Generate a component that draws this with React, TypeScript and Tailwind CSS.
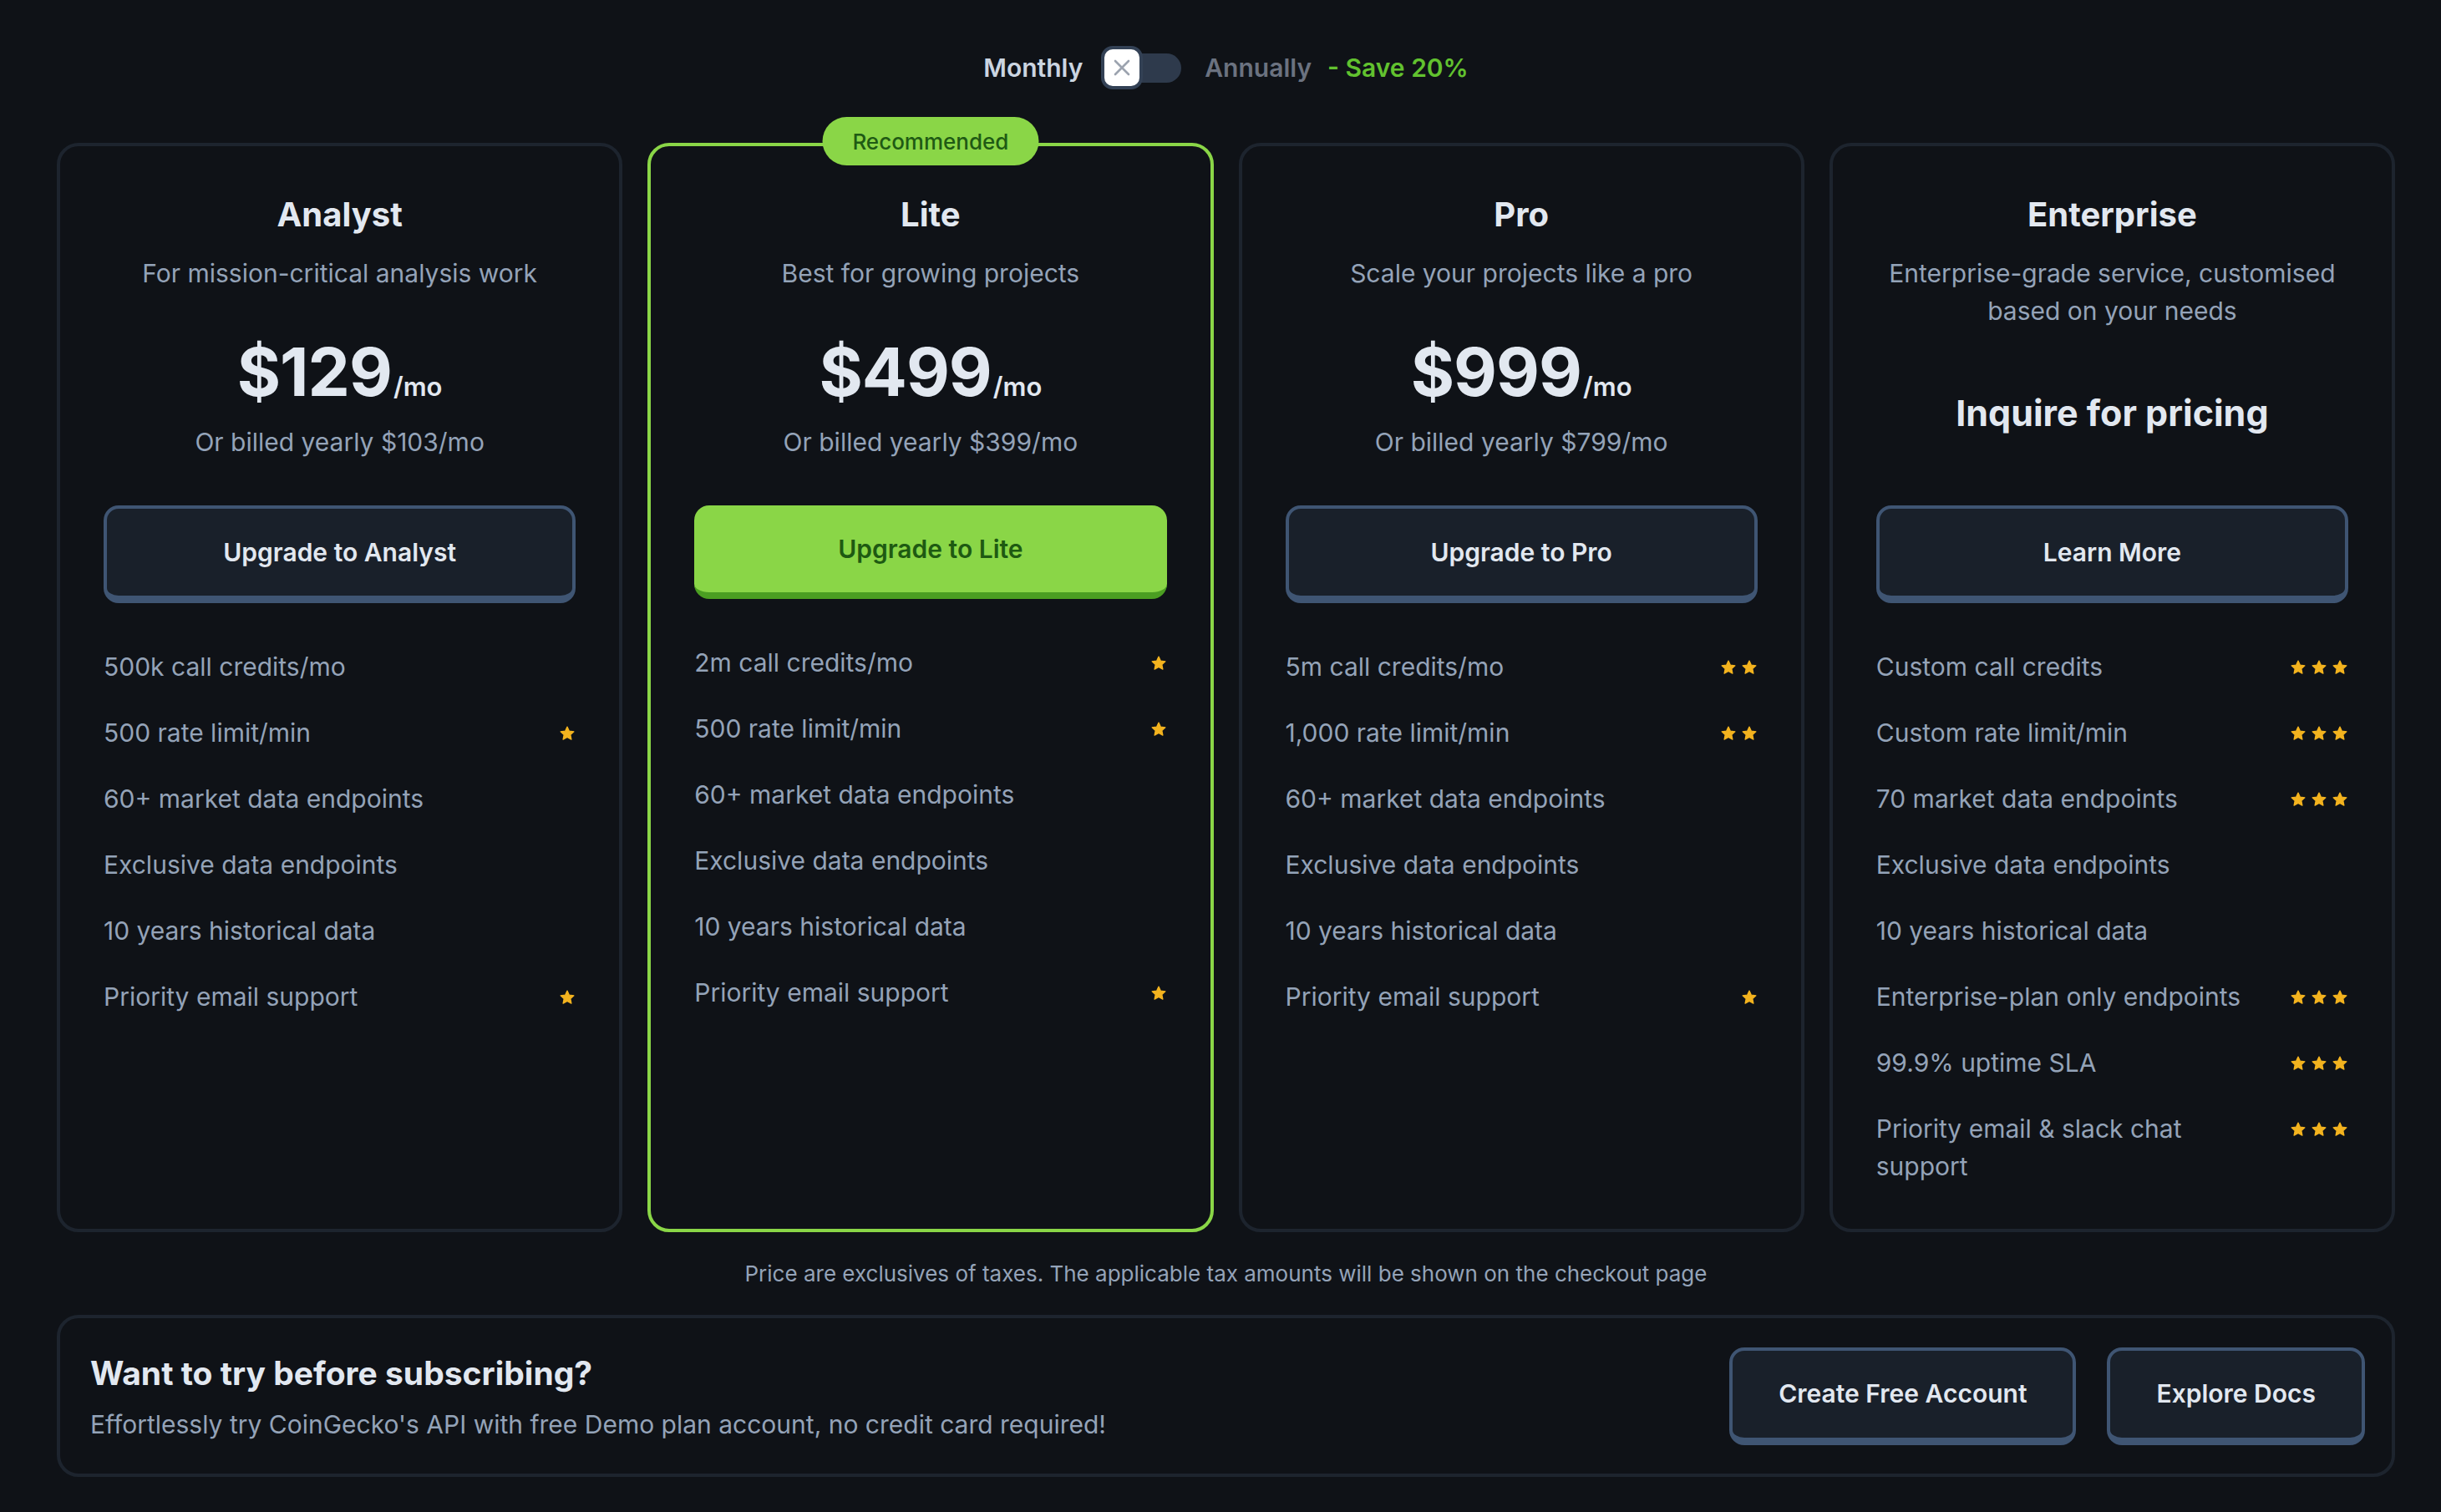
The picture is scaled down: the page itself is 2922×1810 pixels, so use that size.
import React from "react";

type Feature = { text: string; stars: number };
type Plan = {
  name: string;
  subtitle: string;
  price?: string;
  yearly?: string;
  cta: string;
  recommended?: boolean;
  features: Feature[];
};

const plans: Plan[] = [
  {
    name: "Analyst",
    subtitle: "For mission-critical analysis work",
    price: "$129",
    yearly: "Or billed yearly $103/mo",
    cta: "Upgrade to Analyst",
    features: [
      { text: "500k call credits/mo", stars: 0 },
      { text: "500 rate limit/min", stars: 1 },
      { text: "60+ market data endpoints", stars: 0 },
      { text: "Exclusive data endpoints", stars: 0 },
      { text: "10 years historical data", stars: 0 },
      { text: "Priority email support", stars: 1 },
    ],
  },
  {
    name: "Lite",
    subtitle: "Best for growing projects",
    price: "$499",
    yearly: "Or billed yearly $399/mo",
    cta: "Upgrade to Lite",
    recommended: true,
    features: [
      { text: "2m call credits/mo", stars: 1 },
      { text: "500 rate limit/min", stars: 1 },
      { text: "60+ market data endpoints", stars: 0 },
      { text: "Exclusive data endpoints", stars: 0 },
      { text: "10 years historical data", stars: 0 },
      { text: "Priority email support", stars: 1 },
    ],
  },
  {
    name: "Pro",
    subtitle: "Scale your projects like a pro",
    price: "$999",
    yearly: "Or billed yearly $799/mo",
    cta: "Upgrade to Pro",
    features: [
      { text: "5m call credits/mo", stars: 2 },
      { text: "1,000 rate limit/min", stars: 2 },
      { text: "60+ market data endpoints", stars: 0 },
      { text: "Exclusive data endpoints", stars: 0 },
      { text: "10 years historical data", stars: 0 },
      { text: "Priority email support", stars: 1 },
    ],
  },
  {
    name: "Enterprise",
    subtitle: "Enterprise-grade service, customised based on your needs",
    cta: "Learn More",
    features: [
      { text: "Custom call credits", stars: 3 },
      { text: "Custom rate limit/min", stars: 3 },
      { text: "70 market data endpoints", stars: 3 },
      { text: "Exclusive data endpoints", stars: 0 },
      { text: "10 years historical data", stars: 0 },
      { text: "Enterprise-plan only endpoints", stars: 3 },
      { text: "99.9% uptime SLA", stars: 3 },
      { text: "Priority email & slack chat support", stars: 3 },
    ],
  },
];

function Star() {
  return (
    <svg width="20" height="20" viewBox="0 0 24 24" fill="#f3b31f" stroke="#f3b31f" strokeWidth="1.5" strokeLinejoin="round">
      <path d="M12 2.5l2.9 6.1 6.6.8-4.9 4.6 1.3 6.6L12 17.3l-5.9 3.3 1.3-6.6-4.9-4.6 6.6-.8L12 2.5z" />
    </svg>
  );
}

function PlanCard({ plan }: { plan: Plan }) {
  const rec = plan.recommended;
  return (
    <div
      className={
        rec
          ? "relative flex flex-col rounded-[26px] border-[4px] border-[#8ad647] px-[52px] pt-[54px] pb-[52px]"
          : "relative flex flex-col rounded-[26px] border-[4px] border-[#1d242e] px-[52px] pt-[54px] pb-[52px]"
      }
    >
      {rec && (
        <div className="absolute -top-[35px] left-1/2 -translate-x-1/2 flex h-[58px] w-[259px] items-center justify-center rounded-full bg-[#8ad647] text-[26px] font-medium text-[#1f5a14]">
          Recommended
        </div>
      )}
      <div className="flex h-[376px] flex-col">
        <h2 className="text-center text-[40px] font-bold leading-[56px] text-[#e2e8f0]">{plan.name}</h2>
        <p className="mx-auto mt-[20px] max-w-[560px] text-center text-[30px] leading-[45px] text-[#94a3b8]">
          {plan.subtitle}
        </p>
        <div className="flex flex-1 flex-col items-center justify-center">
          {plan.price ? (
            <>
              <div className="flex items-baseline justify-center text-[#e2e8f0]">
                <span className="text-[80px] font-bold leading-none tracking-[-1px]">{plan.price}</span>
                <span className="ml-[2px] text-[31px] font-semibold leading-none">/mo</span>
              </div>
              <p className="mt-[22px] text-center text-[30px] leading-[44px] text-[#94a3b8]">{plan.yearly}</p>
            </>
          ) : (
            <p className="mb-[12px] text-center text-[43px] font-bold leading-[60px] text-[#e2e8f0]">Inquire for pricing</p>
          )}
        </div>
      </div>
      {rec ? (
        <button className="h-[112px] w-full rounded-[18px] border-b-[8px] border-[#4b9e22] bg-[#8ad647] text-[30px] font-semibold text-[#1e5a12]">
          {plan.cta}
        </button>
      ) : (
        <button className="h-[117px] w-full rounded-[18px] border-[4px] border-b-[9px] border-[#3f5573] bg-[#19202a] text-[30px] font-semibold text-[#e2e8f0]">
          {plan.cta}
        </button>
      )}
      <ul className="mt-[54px] flex flex-col gap-[34px]">
        {plan.features.map((f, i) => (
          <li key={i} className="flex items-start justify-between">
            <span className="min-w-0 flex-1 text-[30px] leading-[45px] text-[#94a3b8]">{f.text}</span>
            {f.stars > 0 && (
              <span className="ml-[30px] flex h-[45px] shrink-0 items-center gap-[5px]">
                {Array.from({ length: f.stars }).map((_, j) => (
                  <Star key={j} />
                ))}
              </span>
            )}
          </li>
        ))}
      </ul>
    </div>
  );
}

export default function App() {
  return (
    <div className="min-h-screen w-full bg-[#0f1217] pt-[55px] pl-[68px] pr-[55px] pb-[40px] font-['Inter',sans-serif]">
      <div className="flex h-[52px] items-center justify-center">
        <span className="text-[30px] font-semibold text-[#cbd5e1]">Monthly</span>
        <div className="relative ml-[22px] flex h-[52px] w-[96px] items-center">
          <div className="h-[35px] w-full rounded-full bg-[#2e3a4c]" />
          <div className="absolute left-0 top-0 flex h-[52px] w-[50px] items-center justify-center rounded-[14px] border-[4px] border-[#334155] bg-white">
            <svg width="22" height="22" viewBox="0 0 22 22" fill="none" stroke="#9ca3af" strokeWidth="2.6" strokeLinecap="round">
              <path d="M3 3l16 16M19 3L3 19" />
            </svg>
          </div>
        </div>
        <span className="ml-[28px] text-[30px] font-semibold text-[#6b7280]">Annually</span>
        <span className="ml-[19px] text-[30px] font-semibold text-[#62c22f]">- Save 20%</span>
      </div>

      <div className="mt-[64px] grid grid-cols-4 gap-[30px]">
        {plans.map((p) => (
          <PlanCard key={p.name} plan={p} />
        ))}
      </div>

      <p className="mt-[30px] text-center text-[26px] leading-[40px] text-[#94a3b8]">
        Price are exclusives of taxes. The applicable tax amounts will be shown on the checkout page
      </p>

      <div className="mt-[29px] flex h-[194px] items-center justify-between rounded-[26px] border-[4px] border-[#1d242e] pl-[36px] pr-[32px]">
        <div className="flex flex-col">
          <h3 className="text-[39px] font-bold leading-[56px] text-[#e2e8f0]">Want to try before subscribing?</h3>
          <p className="mt-[11px] text-[30px] leading-[44px] text-[#94a3b8]">
            Effortlessly try CoinGecko's API with free Demo plan account, no credit card required!
          </p>
        </div>
        <div className="flex items-center gap-[37px]">
          <button className="h-[117px] rounded-[18px] border-[4px] border-b-[9px] border-[#3f5573] bg-[#19202a] px-[55px] text-[30px] font-semibold text-[#e2e8f0]">
            Create Free Account
          </button>
          <button className="h-[117px] rounded-[18px] border-[4px] border-b-[9px] border-[#3f5573] bg-[#19202a] px-[55px] text-[30px] font-semibold text-[#e2e8f0]">
            Explore Docs
          </button>
        </div>
      </div>
    </div>
  );
}
